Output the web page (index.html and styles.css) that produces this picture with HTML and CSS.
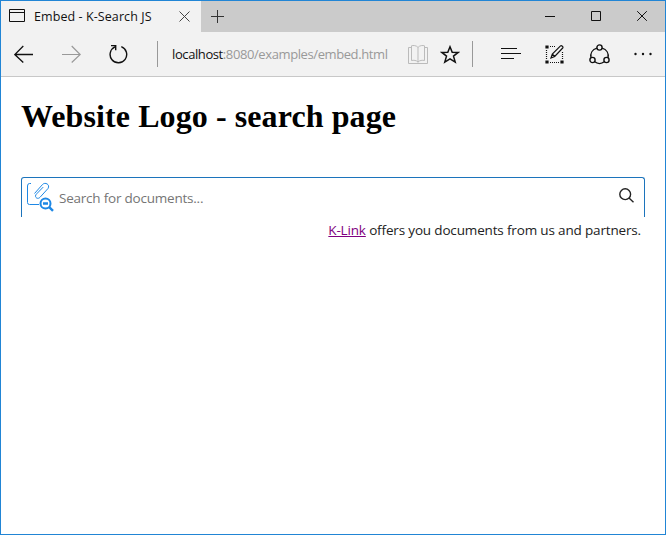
FILE: index.html
```html
<!DOCTYPE html>
<html lang="en">
<head>
<meta charset="utf-8">
<title>Embed - K-Search JS</title>
<link rel="stylesheet" href="styles.css">
</head>
<body>
<div class="window">
  <header class="tabs">
    <div class="tab">
      <svg class="page-icon" width="16" height="13" viewBox="0 0 16 13"><path d="M.5.5h15v12H.5zM.5 3.5h15"/></svg>
      <span class="tab-title">Embed - K-Search JS</span>
      <svg class="tab-close" width="11" height="11" viewBox="0 0 11 11"><path d="M.5.5l10 10M10.500.5l-10 10"/></svg>
    </div>
    <svg class="new-tab" width="13" height="13" viewBox="0 0 13 13"><path d="M6.500 0v13M0 6.500h13"/></svg>
    <div class="controls">
      <svg width="10" height="11" viewBox="0 0 10 11"><path d="M0 5.500h10"/></svg>
      <svg width="10" height="10" viewBox="0 0 10 10"><path d="M.5.5h9v9h-9z"/></svg>
      <svg width="10" height="10" viewBox="0 0 10 10"><path d="M.2.2l9.600 9.600M9.800.2L.2 9.800"/></svg>
    </div>
  </header>
  <nav class="toolbar">
    <svg class="back" width="19" height="18" viewBox="0 0 19 18"><path d="M19 9.500H.8M9.300 1L.8 9.500 9.300 17.500"/></svg>
    <svg class="forward" width="19" height="18" viewBox="0 0 19 18"><path d="M0 9.500h18.200M9.700 1l8.500 8.500-8.500 8"/></svg>
    <svg class="reload" width="19" height="20" viewBox="0 0 19 20"><path d="M12.300 2.700A8.300 8.300 0 1 1 6 2.900M2 1.600h4.700v4.700"/></svg>
    <i class="separator"></i>
    <div class="address">localhost<span>:8080/examples/embed.html</span></div>
    <svg class="book" width="20" height="19" viewBox="0 0 20 19"><path d="M3 2.500H.5v16h19v-16H17M10 2.500v15M10 2.500C8.500.3 5 .2 3.500.8v14.700c2-.5 5-.2 6.500 1.500 1.500-1.700 4.500-2 6.500-1.500V.8C15 .2 11.500.3 10 2.500z"/></svg>
    <svg class="star" width="20" height="19" viewBox="0 0 20 19"><path d="M10 1.800l2.200 5.400 6 .2-4.700 3.700 1.700 6L10 13.800l-5.200 3.300 1.700-6L1.800 7.400l6-.2z"/></svg>
    <i class="separator after-star"></i>
    <svg class="hub" width="20" height="12" viewBox="0 0 20 12"><path d="M0 .5h16M0 5.500h20M0 10.500h13"/></svg>
    <svg class="note" width="19" height="19" viewBox="0 0 19 19"><path class="dots" d="M5 1.500h5M1.500 5v9M17.500 7v7M5 17.500h9"/><path class="corners" d="M1 1h2v2H1zM1 16h2v2H1zM16 16h2v2h-2z"/><path d="M6 13l1.300-4L15.500.9c1-.8 3.100 1 2.200 2.100l-8 8.500zM7.300 9l2.400 2.500"/></svg>
    <svg class="share" width="21" height="21" viewBox="0 0 21 21"><circle cx="10.500" cy="3.500" r="2.600"/><circle cx="3.500" cy="16" r="2.600"/><circle cx="17.500" cy="16" r="2.600"/><path d="M7.900 4.200C3.500 5.500 1 9.200 2 13.800M13.100 4.200c4.400 1.300 6.900 5 5.900 9.600M5.800 17.800c2.700 2.200 6.700 2.200 9.400 0"/></svg>
    <svg class="more" width="18" height="4" viewBox="0 0 18 4"><circle cx="1.500" cy="2" r="1.200"/><circle cx="9" cy="2" r="1.200"/><circle cx="16.500" cy="2" r="1.200"/></svg>
  </nav>
  <main>
    <h1>Website Logo - search page</h1>
    <div class="search">
      <svg class="logo" width="28" height="30" viewBox="0 0 28 30"><path class="thin" d="M5 1.500H3.500Q1.500 1.500 1.500 4v16.500Q1.500 22.500 3.500 22.500H13M8.500 11.500l8-9C19-.3 24.500 2.500 22 6.500l-8 8.800c-1.800 2-4.500.8-4.500-1.200 0-1 .5-1.600 1.200-2.300l6.500-6.700"/><circle cx="19.500" cy="21.500" r="5"/><path class="thick" d="M17 21.500h5M23.200 25.200l3.800 3.600"/></svg>
      <input type="text" placeholder="Search for documents...">
      <svg class="find" width="15" height="15" viewBox="0 0 15 15"><circle cx="6.200" cy="6.200" r="5.400"/><path d="M10 10l4.500 4.300"/></svg>
    </div>
    <p><a href="#">K-Link</a> offers you documents from us and partners.</p>
  </main>
</div>
</body>
</html>
```
FILE: styles.css
```css
* { box-sizing: border-box; }
body { margin: 0; background: #fff; font-family: "Open Sans", "Noto Sans", sans-serif; }
svg { display: block; flex: none; fill: none; stroke: #111; stroke-width: 1; }
.window { height: 535px; border: 1px solid #2185d5; overflow: hidden; }
.tabs { display: flex; height: 31px; background: #cbcbcb; }
.tab { display: flex; width: 200px; background: #f2f2f2; }
.page-icon { margin: 8px 0 0 8px; }
.tab-title { width: 119px; margin-left: 9px; font-size: 12.500px; line-height: 31px; letter-spacing: .08px; white-space: nowrap; color: #111; }
.tab-close { margin: 10px 0 0 26px; stroke: #444; }
.new-tab { margin: 9px 0 0 10px; stroke: #333; }
.controls { display: flex; gap: 36px; margin: 10px 18px 0 auto; }
.toolbar { display: flex; align-items: center; height: 45px; background: #f2f2f2; border-bottom: 1px solid #c8c8c8; }
.back { margin-left: 13px; stroke-width: 1.300; }
.forward { margin-left: 29px; stroke: #999; stroke-width: 1.200; }
.reload { margin-left: 28px; stroke-width: 1.400; }
.separator { flex: none; width: 1px; height: 26px; margin-left: 29px; background: #999; }
.address { flex: none; width: 236px; padding-left: 14px; font-size: 13px; line-height: 44px; letter-spacing: -.4px; white-space: nowrap; color: #111; }
.address span { color: #999; }
.book { margin-left: 14px; stroke: #bbb; }
.star { margin-left: 12px; stroke-width: 1.500; }
.after-star { margin-left: 12px; }
.hub { margin-left: 28px; stroke-width: 1.200; }
.note { margin-left: 24px; stroke-width: 1.200; }
.dots { stroke-dasharray: 1 1; }
.corners { fill: #111; }
.share { margin-left: 25px; stroke-width: 1.400; }
.more { margin-left: 24px; fill: #111; stroke: none; }
main { padding: 21px 20px 0; }
h1 { margin: 0; font: bold 32px/37px "Liberation Serif", serif; letter-spacing: .09px; color: #000; white-space: nowrap; }
.search { display: flex; height: 40px; margin-top: 42px; border: 1px solid #1c74bc; border-bottom: 0; border-radius: 3px 3px 0 0; }
.logo { margin: 4px 0 0 4px; stroke: #1e88e5; stroke-width: 2; }
.thin { stroke-width: 1; }
.thick { stroke-width: 2.500; }
.search input { flex: 1; min-width: 0; padding: 0 0 0 5px; border: 0; outline: 0; background: none; font: 13.500px "Open Sans", sans-serif; letter-spacing: -.22px; }
.search input::placeholder { color: #757575; }
.find { margin: 10px 10px 0 0; stroke: #222; stroke-width: 1.400; }
p { margin: 3px 4px 0 0; font-size: 13.500px; line-height: 20px; letter-spacing: -.16px; text-align: right; white-space: nowrap; color: #222; }
a { color: #800080; }
```
